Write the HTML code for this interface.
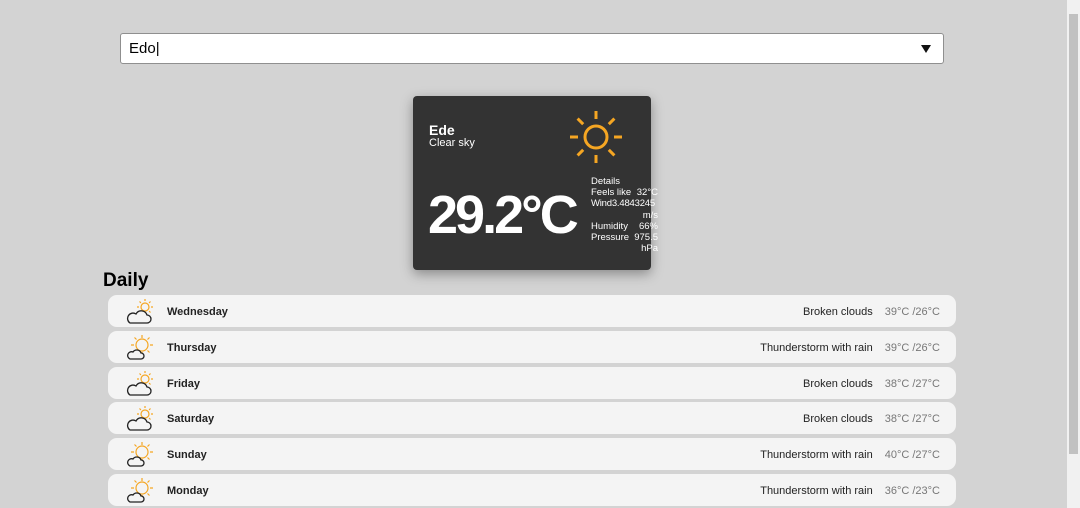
<!DOCTYPE html>
<html><head><style>
body{margin:0;width:1080px;height:508px;background:#d3d3d3;font-family:"Liberation Sans",sans-serif;position:relative;overflow:hidden}
.sb{position:absolute;right:0;top:0;width:13px;height:508px;background:#f1f1f1}
.sb div{position:absolute;left:2px;top:14px;width:9px;height:440px;background:#c1c1c1}
.inp{position:absolute;left:120px;top:33px;width:814px;height:29px;background:#fff;border:1px solid #8f8f8f;border-radius:3px;font-size:15px;line-height:29px;padding-left:8px}
.arr{position:absolute;right:12px;top:11px;width:0;height:0;border-left:5px solid transparent;border-right:5px solid transparent;border-top:8px solid #111}
.card{position:absolute;left:413px;top:96px;width:238px;height:174px;background:#333;border-radius:4px;box-shadow:0 4px 12px rgba(0,0,0,.35);color:#fff}
h2{position:absolute;left:103px;top:270px;margin:0;font-size:19px;font-weight:bold}
.row{position:absolute;left:108px;width:848px;height:32px;background:#f4f4f4;border-radius:9px;font-size:11px}
.row svg{position:absolute;left:18px;top:2px}
.d{position:absolute;left:59px;top:11px;font-weight:bold;color:#222}
.r{position:absolute;right:16px;top:11px;color:#222}
.r span{color:#777;margin-left:12px}
.det{position:absolute;left:178px;top:80px;width:67px;font-size:9.5px;line-height:11.2px;white-space:nowrap}
.det .l{display:flex;justify-content:space-between}
.det .rt{text-align:right}
</style></head><body>
<div class="sb"><div></div></div>
<div class="inp">Edo|<div class="arr"></div></div>
<div class="card">
<div style="position:absolute;left:16px;top:26px;font-size:14px;font-weight:bold">Ede</div>
<div style="position:absolute;left:16px;top:41px;font-size:11px">Clear sky</div>
<svg style="position:absolute;left:155px;top:13px" width="56" height="56" viewBox="0 0 56 56" stroke="#f5a623" stroke-width="3" fill="none"><circle cx="28" cy="28" r="11"/><path d="M28 2v8M28 46v8M2 28h8M46 28h8M9.6 9.6l5.6 5.6M40.8 40.8l5.6 5.6M46.4 9.6l-5.6 5.6M15.2 40.8l-5.6 5.6"/></svg>
<div style="position:absolute;left:15px;top:88px;font-size:54px;font-weight:bold;letter-spacing:-3px">29.2°C</div>
<div class="det"><div>Details</div><div class="l"><span>Feels like</span><span>32°C</span></div><div style="letter-spacing:-0.2px">Wind3.4843245</div><div class="rt">m/s</div><div class="l"><span>Humidity</span><span>66%</span></div><div class="l"><span>Pressure</span><span>975.5</span></div><div class="rt">hPa</div></div>
</div>
<h2>Daily</h2>
<div class="row" style="top:295px"><svg width="30" height="28" viewBox="0 0 30 28"><g stroke="#f5a623" stroke-width="1.2" fill="none"><circle cx="19" cy="10" r="4"/><path d="M19 2v2M19 16v2M11 10h2M25 10h2M13.5 4.5l1.4 1.4M24.5 4.5l-1.4 1.4M24.5 15.5l-1.4-1.4"/></g><path d="M4 26h17a4 4 0 0 0 0-8a6 6 0 0 0-11-1a5 5 0 0 0-6 9z" fill="#f4f4f4" stroke="#222" stroke-width="1.3"/></svg><div class="d">Wednesday</div><div class="r">Broken clouds<span>39°C /26°C</span></div></div>
<div class="row" style="top:331px"><svg width="30" height="28" viewBox="0 0 30 28"><g stroke="#f5a623" stroke-width="1.2" fill="none"><circle cx="16" cy="12" r="6"/><path d="M16 2v3M16 19v3M5 12h3M24 12h3M8.5 4.5l2 2M23.5 4.5l-2 2M23.5 19.5l-2-2"/></g><path d="M4 26h11a3 3 0 0 0 0-6a4.5 4.5 0 0 0-8-1a3.5 3.5 0 0 0-3 7z" fill="#f4f4f4" stroke="#222" stroke-width="1.3"/></svg><div class="d">Thursday</div><div class="r">Thunderstorm with rain<span>39°C /26°C</span></div></div>
<div class="row" style="top:367px"><svg width="30" height="28" viewBox="0 0 30 28"><g stroke="#f5a623" stroke-width="1.2" fill="none"><circle cx="19" cy="10" r="4"/><path d="M19 2v2M19 16v2M11 10h2M25 10h2M13.5 4.5l1.4 1.4M24.5 4.5l-1.4 1.4M24.5 15.5l-1.4-1.4"/></g><path d="M4 26h17a4 4 0 0 0 0-8a6 6 0 0 0-11-1a5 5 0 0 0-6 9z" fill="#f4f4f4" stroke="#222" stroke-width="1.3"/></svg><div class="d">Friday</div><div class="r">Broken clouds<span>38°C /27°C</span></div></div>
<div class="row" style="top:402px"><svg width="30" height="28" viewBox="0 0 30 28"><g stroke="#f5a623" stroke-width="1.2" fill="none"><circle cx="19" cy="10" r="4"/><path d="M19 2v2M19 16v2M11 10h2M25 10h2M13.5 4.5l1.4 1.4M24.5 4.5l-1.4 1.4M24.5 15.5l-1.4-1.4"/></g><path d="M4 26h17a4 4 0 0 0 0-8a6 6 0 0 0-11-1a5 5 0 0 0-6 9z" fill="#f4f4f4" stroke="#222" stroke-width="1.3"/></svg><div class="d">Saturday</div><div class="r">Broken clouds<span>38°C /27°C</span></div></div>
<div class="row" style="top:438px"><svg width="30" height="28" viewBox="0 0 30 28"><g stroke="#f5a623" stroke-width="1.2" fill="none"><circle cx="16" cy="12" r="6"/><path d="M16 2v3M16 19v3M5 12h3M24 12h3M8.5 4.5l2 2M23.5 4.5l-2 2M23.5 19.5l-2-2"/></g><path d="M4 26h11a3 3 0 0 0 0-6a4.5 4.5 0 0 0-8-1a3.5 3.5 0 0 0-3 7z" fill="#f4f4f4" stroke="#222" stroke-width="1.3"/></svg><div class="d">Sunday</div><div class="r">Thunderstorm with rain<span>40°C /27°C</span></div></div>
<div class="row" style="top:474px"><svg width="30" height="28" viewBox="0 0 30 28"><g stroke="#f5a623" stroke-width="1.2" fill="none"><circle cx="16" cy="12" r="6"/><path d="M16 2v3M16 19v3M5 12h3M24 12h3M8.5 4.5l2 2M23.5 4.5l-2 2M23.5 19.5l-2-2"/></g><path d="M4 26h11a3 3 0 0 0 0-6a4.5 4.5 0 0 0-8-1a3.5 3.5 0 0 0-3 7z" fill="#f4f4f4" stroke="#222" stroke-width="1.3"/></svg><div class="d">Monday</div><div class="r">Thunderstorm with rain<span>36°C /23°C</span></div></div>
</body></html>
